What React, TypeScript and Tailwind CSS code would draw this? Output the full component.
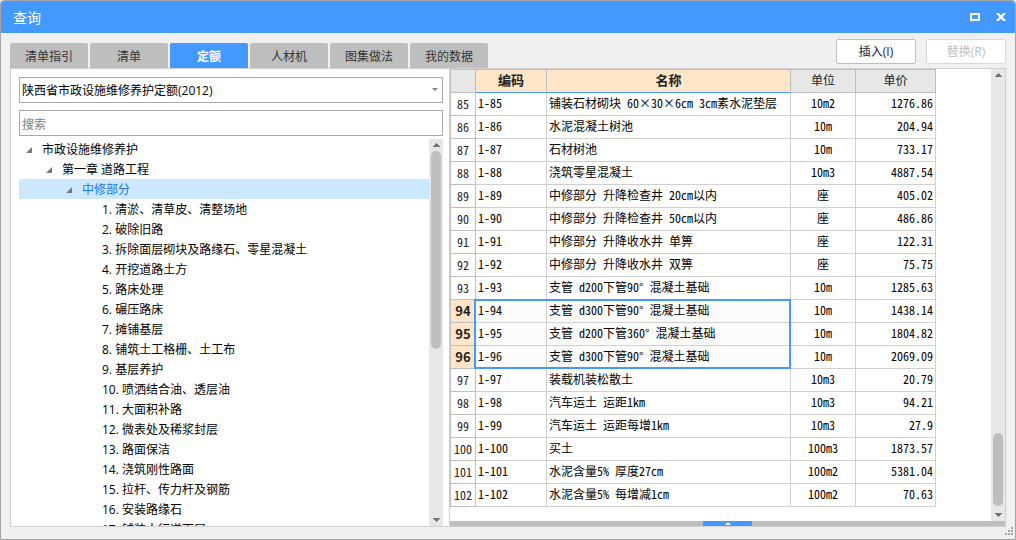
import { useState } from "react";
import clsx from "clsx";

const TABS = ["清单指引", "清单", "定额", "人材机", "图集做法", "我的数据"];

const SECTIONS = [
  "1. 清淤、清草皮、清整场地",
  "2. 破除旧路",
  "3. 拆除面层砌块及路缘石、零星混凝土",
  "4. 开挖道路土方",
  "5. 路床处理",
  "6. 碾压路床",
  "7. 摊铺基层",
  "8. 铺筑土工格栅、土工布",
  "9. 基层养护",
  "10. 喷洒结合油、透层油",
  "11. 大面积补路",
  "12. 微表处及稀浆封层",
  "13. 路面保洁",
  "14. 浇筑刚性路面",
  "15. 拉杆、传力杆及钢筋",
  "16. 安装路缘石",
  "17. 铺装人行道面层",
];

const TREE = [
  { label: "市政设施维修养护", level: 0, open: true },
  { label: "第一章 道路工程", level: 1, open: true },
  { label: "中修部分", level: 2, open: true },
  ...SECTIONS.map((label) => ({ label, level: 3, open: false })),
];

const INDENT = ["pl-1", "pl-6", "pl-11", "pl-16"];

const FIRST_ROW = 85;
const ROW_HEIGHT = 23;

const ROWS = [
  ["铺装石材砌块 60×30×6cm 3cm素水泥垫层", "10m2", "1276.86"],
  ["水泥混凝土树池", "10m", "204.94"],
  ["石材树池", "10m", "733.17"],
  ["浇筑零星混凝土", "10m3", "4887.54"],
  ["中修部分 升降检查井 20cm以内", "座", "405.02"],
  ["中修部分 升降检查井 50cm以内", "座", "486.86"],
  ["中修部分 升降收水井 单箅", "座", "122.31"],
  ["中修部分 升降收水井 双箅", "座", "75.75"],
  ["支管 d200下管90° 混凝土基础", "10m", "1285.63"],
  ["支管 d300下管90° 混凝土基础", "10m", "1438.14"],
  ["支管 d200下管360° 混凝土基础", "10m", "1804.82"],
  ["支管 d300下管90° 混凝土基础", "10m", "2069.09"],
  ["装载机装松散土", "10m3", "20.79"],
  ["汽车运土 运距1km", "10m3", "94.21"],
  ["汽车运土 运距每增1km", "10m3", "27.9"],
  ["买土", "100m3", "1873.57"],
  ["水泥含量5% 厚度27cm", "100m2", "5381.04"],
  ["水泥含量5% 每增减1cm", "100m2", "70.63"],
];

const SELECTION = { from: 94, to: 96 };

function Arrow({ down }: { down?: boolean }) {
  return (
    <svg width="8" height="4" viewBox="0 0 8 4" shapeRendering="crispEdges" aria-hidden="true">
      <path d={down ? "M0 0h8L4 4z" : "M4 0l4 4H0z"} fill="#73737b" />
    </svg>
  );
}

function ScrollBar({ start, size }: { start: number; size: number }) {
  return (
    <div className="flex w-3.5 shrink-0 flex-col bg-[#e7e7e7]">
      <button type="button" aria-label="向上滚动" className="flex h-3 items-center justify-center">
        <Arrow />
      </button>
      <div className="min-h-0 flex-1">
        <div style={{ height: `${start}%` }} />
        <div className="mx-0.5 rounded-full bg-[#bebebe]" style={{ height: `${size}%` }} />
      </div>
      <button type="button" aria-label="向下滚动" className="flex h-3 items-center justify-center">
        <Arrow down />
      </button>
    </div>
  );
}

function TitleBar() {
  return (
    <header className="flex h-8 shrink-0 items-center justify-between bg-[#4399ff] pr-[9px] pl-3 text-white">
      <h1 className="pt-0.5 text-sm">查询</h1>
      <div className="flex gap-4">
        <button type="button" aria-label="最大化">
          <svg width="10" height="8" viewBox="0 0 10 8" shapeRendering="crispEdges">
            <path d="M0 0h10v8H0zM2 2v4h6V2z" fill="#fff" fillRule="evenodd" />
          </svg>
        </button>
        <button type="button" aria-label="关闭">
          <svg width="10" height="8" viewBox="0 0 10 8">
            <path d="M1 0l8 8M9 0L1 8" stroke="#fff" strokeWidth="2.4" />
          </svg>
        </button>
      </div>
    </header>
  );
}

function Tree() {
  const [active, setActive] = useState(2);

  return (
    <div className="mt-[3px] flex min-h-0 flex-1">
      <ul role="tree" aria-label="定额章节" className="min-w-0 flex-1 overflow-hidden">
        {TREE.map((node, i) => (
          <li key={node.label} role="treeitem" aria-level={node.level + 1} aria-selected={i === active}>
            <button
              type="button"
              onClick={() => setActive(i)}
              className={clsx(
                "flex h-5 w-full items-center whitespace-nowrap pt-0.5 text-left",
                INDENT[node.level],
                i === active ? "bg-[#cce8ff] text-[#1c75e5]" : "text-black",
              )}
            >
              <span className="flex w-[19px] shrink-0 pl-[3px]">
                {node.open && (
                  <svg width="6" height="6" viewBox="0 0 6 6" aria-hidden="true">
                    <path d="M6 0v6H0z" fill="#7a7a7a" />
                  </svg>
                )}
              </span>
              {node.label}
            </button>
          </li>
        ))}
      </ul>
      <ScrollBar start={0} size={54.5} />
    </div>
  );
}

function SidePanel() {
  return (
    <section className="flex w-[439px] shrink-0 flex-col border-r border-[#d2d2d2] bg-white pt-2 pr-1.5 pl-2">
      <div className="relative">
        <select
          aria-label="定额库"
          className="h-[26px] w-full appearance-none border border-[#a8a8a8] bg-white px-0.5 pt-0.5 text-black"
        >
          <option>陕西省市政设施维修养护定额(2012)</option>
        </select>
        <svg
          className="pointer-events-none absolute top-[11px] right-[5px]"
          width="6"
          height="3"
          viewBox="0 0 6 3"
          aria-hidden="true"
        >
          <path d="M0 0h6L3 3z" fill="#808080" />
        </svg>
      </div>
      <input
        type="search"
        aria-label="搜索"
        placeholder="搜索"
        className="mt-[7px] h-[26px] w-full shrink-0 border border-[#a8a8a8] bg-white px-0.5 pt-0.5 placeholder:text-[#808080]"
      />
      <Tree />
    </section>
  );
}

function PriceTable() {
  const head = "border-r border-b border-r-[#bebebe] pb-0.5 text-[#222]";
  const cell = "border-r border-b border-[#d0d0d0] px-0.5 pb-0.5";

  return (
    <div className="relative w-max border-t border-l border-[#bebebe]">
      <table className="table-fixed border-separate border-spacing-0 whitespace-nowrap font-['Noto_Sans_CJK_SC',sans-serif] leading-4 text-black [font-feature-settings:'hwid']">
        <colgroup>
          <col className="w-[25px]" />
          <col className="w-[71px]" />
          <col className="w-[244px]" />
          <col className="w-[65px]" />
          <col className="w-20" />
        </colgroup>
        <thead>
          <tr className="h-[23px]">
            <td className={clsx(head, "border-b-[#bebebe] bg-[#e7e7e7]")} />
            <th scope="col" className={clsx(head, "border-b-[#4399ff] bg-[#ffe6c9] text-[13px] font-bold")}>
              编码
            </th>
            <th scope="col" className={clsx(head, "border-b-[#4399ff] bg-[#ffe6c9] text-[13px] font-bold")}>
              名称
            </th>
            <th scope="col" className={clsx(head, "border-b-[#bebebe] bg-[#e7e7e7] font-normal")}>
              单位
            </th>
            <th scope="col" className={clsx(head, "border-b-[#bebebe] bg-[#e7e7e7] font-normal")}>
              单价
            </th>
          </tr>
        </thead>
        <tbody>
          {ROWS.map(([name, unit, price], i) => {
            const no = FIRST_ROW + i;
            const selected = no >= SELECTION.from && no <= SELECTION.to;
            return (
              <tr key={no} className="h-[23px]">
                <th
                  scope="row"
                  className={clsx(
                    "border-r border-b border-[#bebebe] text-[#222]",
                    selected
                      ? "bg-[#ffe6c9] text-[13px] font-bold [font-feature-settings:normal]"
                      : "font-normal",
                  )}
                >
                  {no}
                </th>
                <td className={clsx(cell, selected && "bg-[#fcfcfc]")}>1-{no}</td>
                <td className={clsx(cell, selected && "bg-[#fcfcfc]")}>{name}</td>
                <td className={clsx(cell, "text-center")}>{unit}</td>
                <td className={clsx(cell, "text-right")}>{price}</td>
              </tr>
            );
          })}
        </tbody>
      </table>
      {/* selected range frame */}
      <div
        className="pointer-events-none absolute left-[23px] w-[317px] border-2 border-[#4399ff]"
        style={{
          top: ROW_HEIGHT - 1 + (SELECTION.from - FIRST_ROW) * ROW_HEIGHT,
          height: (SELECTION.to - SELECTION.from + 1) * ROW_HEIGHT + 1,
        }}
      />
    </div>
  );
}

export default function App() {
  const [tab, setTab] = useState("定额");

  return (
    <div className="flex h-screen flex-col overflow-hidden rounded-t border border-[#a5a5a5] bg-[#f0f0f0] font-['Open_Sans','Noto_Sans_CJK_SC',sans-serif] text-xs">
      <TitleBar />

      <div className="flex h-[35px] shrink-0 items-end justify-between px-[9px]">
        <div role="tablist" className="flex gap-0.5">
          {TABS.map((name) => (
            <button
              key={name}
              type="button"
              role="tab"
              aria-selected={name === tab}
              onClick={() => setTab(name)}
              className={clsx(
                "h-[25px] w-[78px] rounded-t-xs pt-0.5",
                name === tab ? "bg-[#4399ff] font-bold text-white" : "bg-[#bebebe] text-[#333]",
              )}
            >
              {name}
            </button>
          ))}
        </div>
        <div className="mb-1 flex gap-2.5">
          <button type="button" className="h-[25px] w-20 rounded-xs border border-[#bebebe] bg-white text-[#222]">
            插入(I)
          </button>
          <button
            type="button"
            disabled
            className="h-[25px] w-20 rounded-xs border border-[#d8d8d8] bg-white text-[#bebebe]"
          >
            替换(R)
          </button>
        </div>
      </div>

      <main className="mx-[9px] flex min-h-0 flex-1 border border-[#d0d0d0]">
        <SidePanel />
        <section className="flex min-w-0 flex-1 flex-col bg-white">
          <div className="flex min-h-0 flex-1">
            <div className="min-w-0 flex-1 overflow-hidden">
              <PriceTable />
            </div>
            <ScrollBar start={82.3} size={17} />
          </div>
          <div className="flex h-[5px] shrink-0 justify-center bg-[#bebebe]">
            <button
              type="button"
              aria-label="展开详情"
              className="flex w-[49px] items-center justify-center bg-[#4399ff]"
            >
              <svg width="6" height="3" viewBox="0 0 6 3" aria-hidden="true">
                <path d="M3 0l3 3H0z" fill="#fff" />
              </svg>
            </button>
          </div>
        </section>
      </main>

      <footer className="flex h-3 shrink-0 justify-end pr-0.5">
        <svg width="8" height="8" viewBox="0 0 8 8" shapeRendering="crispEdges" aria-hidden="true">
          <path d="M6 0h2v2H6zM3 3h2v2H3zM6 3h2v2H6zM0 6h2v2H0zM3 6h2v2H3zM6 6h2v2H6z" fill="#a5a5a5" />
        </svg>
      </footer>
    </div>
  );
}
